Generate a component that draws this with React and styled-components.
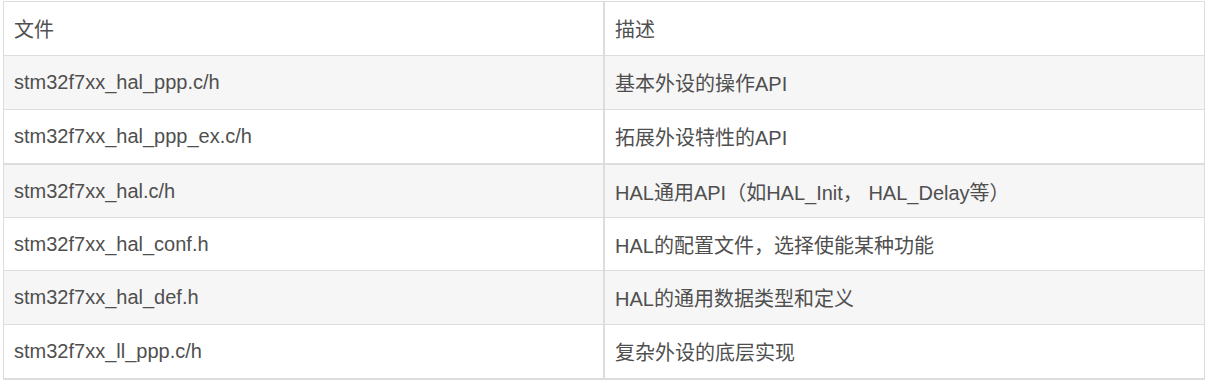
import React from "react";
import styled, { createGlobalStyle } from "styled-components";

const Global = createGlobalStyle`
  html, body { margin: 0; padding: 0; background: #ffffff; }
  body { font-family: "Liberation Sans", Arial, "Noto Sans CJK SC", sans-serif; }
`;

const Page = styled.div`
  padding: 1px 0 0 3px;
`;

const Table = styled.div`
  width: 1202px;
  box-sizing: border-box;
  border: 1px solid #dddddd;
  border-bottom-width: 2px;
  border-top-width: 1px;
  color: #4f4f4f;
  font-size: 20px;
`;

const Row = styled.div`
  display: grid;
  grid-template-columns: 599px 1fr;
  background: ${(p) => (p.$striped ? "#f6f6f6" : "#ffffff")};
  border-top: ${(p) => (p.$first ? "none" : p.$thick ? "2px solid #dddddd" : "1px solid #dddddd")};
  height: ${(p) => p.$h}px;
`;

const Cell = styled.div`
  display: flex;
  align-items: center;
  padding: 0 10px;
  white-space: nowrap;
  border-left: ${(p) => (p.$divider ? "2px solid #dddddd" : "none")};
`;

const rows = [
  ["stm32f7xx_hal_ppp.c/h", "基本外设的操作API"],
  ["stm32f7xx_hal_ppp_ex.c/h", "拓展外设特性的API"],
  ["stm32f7xx_hal.c/h", "HAL通用API（如HAL_Init， HAL_Delay等）"],
  ["stm32f7xx_hal_conf.h", "HAL的配置文件，选择使能某种功能"],
  ["stm32f7xx_hal_def.h", "HAL的通用数据类型和定义"],
  ["stm32f7xx_ll_ppp.c/h", "复杂外设的底层实现"],
];

const heights = [53, 53, 52, 52, 53, 53];

export default function App() {
  return (
    <>
      <Global />
      <Page>
        <Table>
          <Row $first $h={53}>
            <Cell>文件</Cell>
            <Cell $divider>描述</Cell>
          </Row>
          {rows.map(([file, desc], i) => (
            <Row key={file} $striped={i % 2 === 0} $thick={i === 2} $h={heights[i]}>
              <Cell>{file}</Cell>
              <Cell $divider>{desc}</Cell>
            </Row>
          ))}
        </Table>
      </Page>
    </>
  );
}
